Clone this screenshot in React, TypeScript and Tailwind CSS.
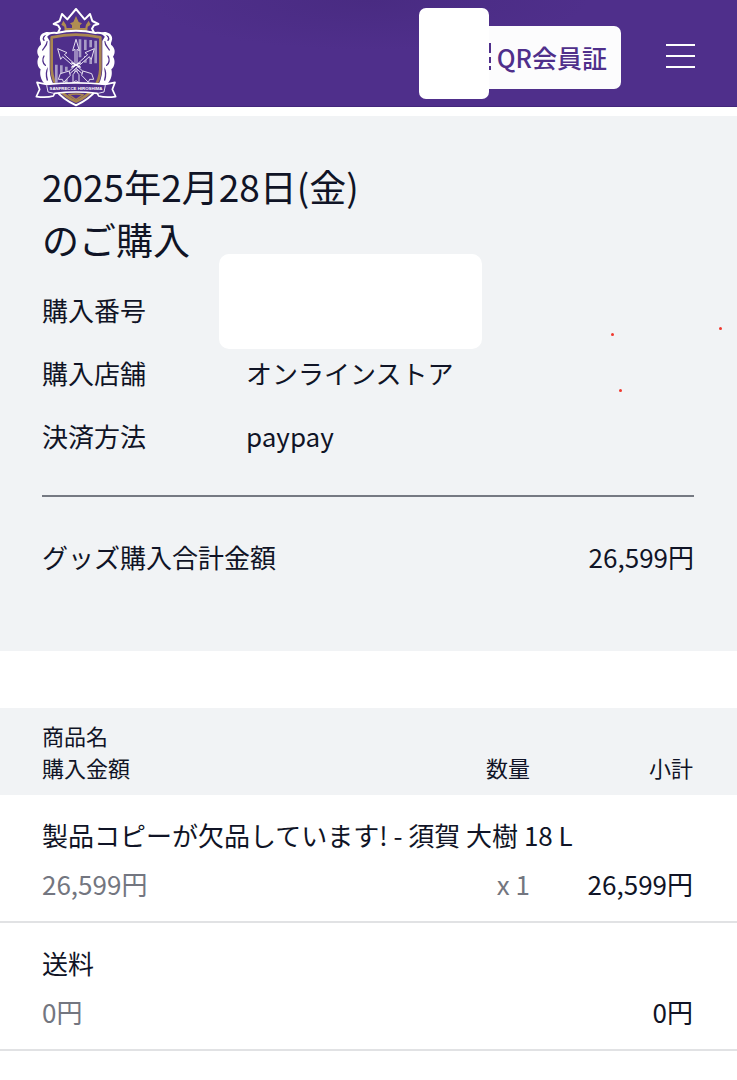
const crownPoints =
  "114,98 120,86 114,76 101,72 119,63 126,42 142,58 152,46 168,27 184,46 194,58 210,42 217,63 235,72 222,76 216,86 222,98";

function Emblem() {
  return (
    <svg viewBox="45 24 246 297" className="h-[99px] w-[82px]" role="img" aria-label="Sanfrecce Hiroshima">
      <g strokeLinejoin="round">
        {/* side feathers */}
        <path
          d="M94 98 C78 92 62 100 60 112 C58 122 64 126 63 134 C50 144 49 158 57 170 C49 182 52 200 62 208 C58 222 62 240 74 252 L98 254 Z"
          fill="#fff"
        />
        <path
          d="M242 98 C258 92 274 100 276 112 C278 122 272 126 273 134 C286 144 287 158 279 170 C287 182 284 200 274 208 C278 222 274 240 262 252 L238 254 Z"
          fill="#fff"
        />
        <g fill="none" stroke="#4f2f8b" strokeWidth="4" strokeLinecap="round">
          <path d="M82 106 C72 106 67 114 72 121 M82 124 C80 138 72 142 68 150 M72 168 C66 178 68 190 76 196 M84 204 C76 216 78 226 82 240" />
          <path d="M254 106 C264 106 269 114 264 121 M254 124 C256 138 264 142 268 150 M264 168 C270 178 268 190 260 196 M252 204 C260 216 258 226 254 240" />
        </g>

        {/* crown */}
        <polygon points={crownPoints} fill="#4f2f8b" stroke="#fff" strokeWidth="6" />
        <path
          d="M134 94 L133 80 L124 74 L130 62 L138 74 L140 84 H156 V76 L150 70 L160 66 L168 48 L176 66 L186 70 L180 76 V84 H196 L198 74 L206 62 L212 74 L203 80 L202 94 Q168 86 134 94 Z"
          fill="#b08d52"
        />

        {/* shield */}
        <path
          d="M78 110 Q88 96 110 99 Q168 86 226 99 Q248 96 258 110 L250 124 V208 Q248 280 168 316 Q88 280 86 208 V124 Z"
          fill="#4f2f8b"
          stroke="#fff"
          strokeWidth="6"
        />
        <path
          d="M95 112 Q168 96 241 112 V208 Q238 272 168 305 Q98 272 95 208 Z"
          fill="#4f2f8b"
          stroke="#a98650"
          strokeWidth="8"
        />
        <g stroke="#a89bc6" strokeWidth="8">
          <path d="M180 118 V172 M196 119 V150 M196 168 V188 M212 120 V142 M212 164 V192 M227 122 V190" />
          <path d="M109 194 V248 M124 196 V222 M139 200 V214 M139 232 V250" />
        </g>

        {/* three arrows */}
        <g fill="#4f2f8b" stroke="#e5dff0" strokeWidth="3">
          <path d="M168 118 L158 152 L165 148 V230 H171 V148 L178 152 Z" />
          <path d="M113 146 L122 178 L128 170 L205 237 L209 232 L133 164 L141 158 Z" />
          <path d="M223 146 L214 178 L208 170 L131 237 L127 232 L203 164 L195 158 Z" />
          <path d="M147 213 L121 221 L115 238 L127 238 L131 247 L151 226 Z" />
          <path d="M189 213 L215 221 L221 238 L209 238 L205 247 L185 226 Z" />
          <path d="M168 212 L159 224 V248 L168 242 L177 248 V224 Z" />
        </g>
        <path d="M154 188 L182 202 M154 202 L182 188" stroke="#fff" strokeWidth="4" />

        {/* ribbon */}
        <path
          d="M51 247 L80 253 Q168 244 256 253 L285 247 L277 268 L287 290 Q256 294 236 288 L232 280 Q168 272 104 280 L100 288 Q80 294 49 290 L59 268 Z"
          fill="#4f2f8b"
          stroke="#fff"
          strokeWidth="5"
        />
        <path d="M80 256 L84 276 L102 280 M256 256 L252 276 L234 280" fill="none" stroke="#e5dff0" strokeWidth="3" />
        <path d="M146 284 Q168 280 190 284 L168 299 Z" fill="#4f2f8b" stroke="#a98650" strokeWidth="4" />
      </g>
      <text
        x="168"
        y="269"
        textAnchor="middle"
        fill="#fff"
        fontFamily="Liberation Sans, sans-serif"
        fontWeight="700"
        fontSize="13"
      >
        SANFRECCE HIROSHIMA
      </text>
    </svg>
  );
}

function QrIcon() {
  return (
    <svg viewBox="0 0 28 28" className="size-7 shrink-0" fill="none" stroke="currentColor" strokeWidth="2" aria-hidden="true">
      <path d="M1 1h10v10H1zM17 1h10v8H17zM1 17h10v10H1zM5 5h2v2H5zM21 4h2v2h-2zM5 21h2v2H5z" />
      <path d="M16 15h4v4h-4M27 14v6M22 20v7M27 23v4M16 23v4" />
    </svg>
  );
}

const details = [
  { label: "購入番号", value: "" },
  { label: "購入店舗", value: "オンラインストア" },
  { label: "決済方法", value: "paypay" },
];

const items = [
  { name: "製品コピーが欠品しています! - 須賀 大樹 18 L", price: "26,599円", quantity: "x 1", subtotal: "26,599円" },
  { name: "送料", price: "0円", quantity: "", subtotal: "0円" },
];

const specks = ["right-[123px] top-[217px]", "right-[15px] top-[211px]", "right-[115px] top-[273px]"];

export default function App() {
  return (
    <div
      lang="ja"
      className="min-h-screen bg-white font-['Noto_Sans_CJK_JP',sans-serif] text-[26px] leading-[38px] text-[#101426]"
    >
      <header className="flex h-[107px] items-center border-b border-[#43277b] bg-[#4f2f8b] bg-[radial-gradient(ellipse_220px_50px_at_50%_0,#492b82,#4f2f8b)] pl-[35px] pr-[42px]">
        <a href="#" className="mt-[8px]">
          <Emblem />
        </a>
        <div className="relative ml-auto">
          <button
            type="button"
            className="mt-[8px] flex h-[63px] items-center gap-[6px] rounded-[7px] bg-[#fcfcfd] px-[14px] text-[25px] font-medium text-[#4f2f8b]"
          >
            <QrIcon />
            QR会員証
          </button>
          <div className="absolute -left-[30px] -top-[10px] h-[91px] w-[70px] rounded-[7px] bg-white" />
        </div>
        <button type="button" aria-label="メニュー" className="ml-[45px] mt-[6px] flex flex-col gap-[9px]">
          <span className="h-[2px] w-[29px] bg-white" />
          <span className="h-[2px] w-[29px] bg-white" />
          <span className="h-[2px] w-[29px] bg-white" />
        </button>
      </header>

      <main className="pt-[9px]">
        <section className="relative bg-[#f1f3f5] pb-[75px] pl-[42px] pr-[43px] pt-[44px]">
          <h1 className="text-[37px] leading-[53px]">
            2025年2月28日(金)
            <br />
            のご購入
          </h1>
          <dl className="mt-[12px]">
            {details.map((row) => (
              <div key={row.label} className="flex leading-[63px]">
                <dt className="w-[204px]">{row.label}</dt>
                <dd>{row.value}</dd>
              </div>
            ))}
          </dl>
          <hr className="mt-[28px] border-t-2 border-[#757982]" />
          <div className="mt-[41px] flex justify-between">
            <span>グッズ購入合計金額</span>
            <span>26,599円</span>
          </div>
          <div className="absolute left-[219px] top-[138px] h-[95px] w-[263px] rounded-[10px] bg-white" />
          {specks.map((place) => (
            <span key={place} className={`absolute size-[3px] rounded-full bg-[#f0382e] ${place}`} />
          ))}
        </section>

        <table className="mt-[57px] w-full border-collapse">
          <thead className="bg-[#f1f3f5] text-[22px] leading-[32px]">
            <tr className="align-bottom">
              <th scope="col" className="pb-[12px] pl-[42px] pt-[11px] text-left font-normal">
                商品名
                <br />
                購入金額
              </th>
              <th scope="col" className="pb-[12px] text-right font-normal">
                数量
              </th>
              <th scope="col" className="w-[207px] pb-[12px] pr-[44px] text-right font-normal">
                小計
              </th>
            </tr>
          </thead>
          {items.map((item) => (
            <tbody key={item.name} className="border-b-2 border-[#e1e2e4]">
              <tr>
                <td colSpan={3} className="pl-[42px] pr-[44px] pt-[21px]">
                  {item.name}
                </td>
              </tr>
              <tr>
                <td className="pb-[18px] pl-[42px] pt-[11px] text-[#737680]">{item.price}</td>
                <td className="pb-[18px] pt-[11px] text-right text-[#737680]">{item.quantity}</td>
                <td className="pb-[18px] pr-[44px] pt-[11px] text-right">{item.subtotal}</td>
              </tr>
            </tbody>
          ))}
        </table>
      </main>
    </div>
  );
}
